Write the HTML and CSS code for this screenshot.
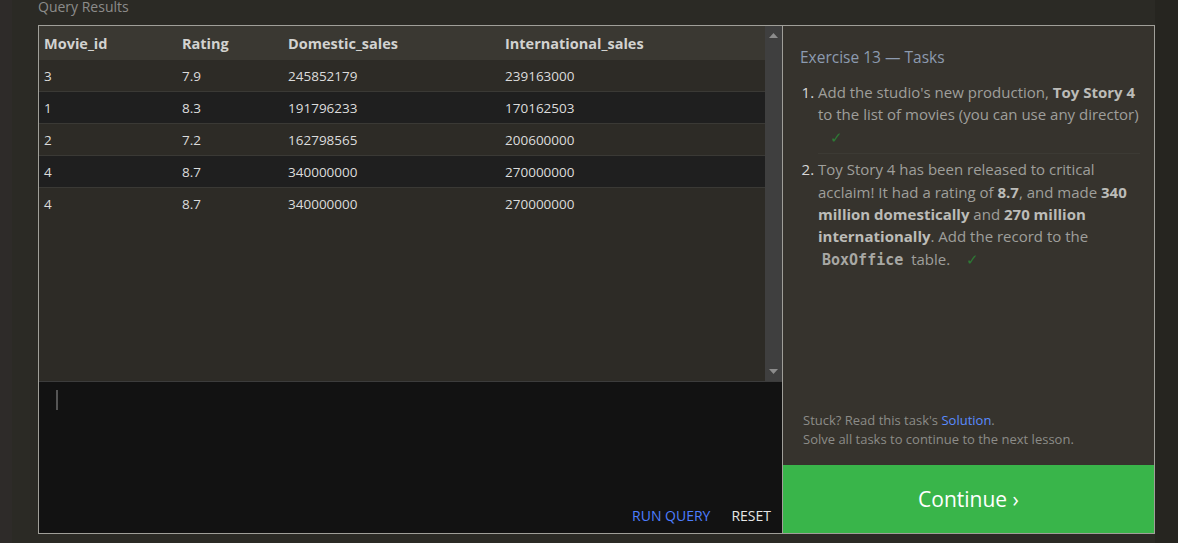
FILE: index.html
```html
<!DOCTYPE html>
<html>
<head>
<meta charset="utf-8">
<link rel="stylesheet" href="styles.css">
</head>
<body>
<div class="page">
  <div class="title">Query Results</div>
  <div class="workspace">
    <div class="left">
      <div class="results">
        <div class="table">
          <div class="row head">
            <div class="cell">Movie_id</div>
            <div class="cell">Rating</div>
            <div class="cell">Domestic_sales</div>
            <div class="cell">International_sales</div>
          </div>
          <div class="row odd">
            <div class="cell">3</div><div class="cell">7.9</div><div class="cell">245852179</div><div class="cell">239163000</div>
          </div>
          <div class="row even">
            <div class="cell">1</div><div class="cell">8.3</div><div class="cell">191796233</div><div class="cell">170162503</div>
          </div>
          <div class="row odd">
            <div class="cell">2</div><div class="cell">7.2</div><div class="cell">162798565</div><div class="cell">200600000</div>
          </div>
          <div class="row even">
            <div class="cell">4</div><div class="cell">8.7</div><div class="cell">340000000</div><div class="cell">270000000</div>
          </div>
          <div class="row odd">
            <div class="cell">4</div><div class="cell">8.7</div><div class="cell">340000000</div><div class="cell">270000000</div>
          </div>
        </div>
        <div class="scrollbar">
          <svg class="arrow" width="9" height="5" viewBox="0 0 9 5"><polygon points="0,5 9,5 4.5,0" fill="#8c8c8c"/></svg>
          <svg class="arrow" width="9" height="5" viewBox="0 0 9 5"><polygon points="0,0 9,0 4.5,5" fill="#8c8c8c"/></svg>
        </div>
      </div>
      <div class="editor">
        <div class="caret"></div>
        <div class="actions">
          <span class="run">RUN QUERY</span>
          <span class="reset">RESET</span>
        </div>
      </div>
    </div>
    <div class="right">
      <div class="tasks">
        <h2 class="tasks-title">Exercise 13 — Tasks</h2>
        <ol class="task-list">
          <li class="task">Add the studio's new production, <b>Toy Story 4</b> to the list of movies (you can use any director) <span class="check">✓</span></li>
          <li class="task">Toy Story 4 has been released to critical acclaim! It had a rating of <b>8.7</b>, and made <b>340 million domestically</b> and <b>270 million internationally</b>. Add the record to the <code>BoxOffice</code> table. <span class="check">✓</span></li>
        </ol>
      </div>
      <div class="help">
        <div>Stuck? Read this task's <span class="link">Solution</span>.</div>
        <div>Solve all tasks to continue to the next lesson.</div>
      </div>
      <div class="continue">Continue ›</div>
    </div>
  </div>
</div>
</body>
</html>
```

FILE: styles.css
```css
html, body {
  margin: 0;
  padding: 0;
}
body {
  background: linear-gradient(to right, #2e2b29 0, #2e2b29 12px, #2b2a25 12px, #2b2a25 1155px, #262520 1155px);
  height: 543px;
  overflow: hidden;
  font-family: "Open Sans", "Noto Sans", sans-serif;
}
.page {
  padding-left: 38px;
}
.title {
  height: 25px;
  line-height: 14px;
  font-size: 14px;
  color: #8c8c8a;
}
.workspace {
  display: flex;
  width: 1117px;
  height: 509px;
  box-sizing: border-box;
  border: 1px solid #a09f99;
}
.left {
  width: 743px;
  display: flex;
  flex-direction: column;
}
.results {
  height: 355px;
  display: flex;
  background: #2d2b26;
}
.table {
  flex: 1;
}
.row {
  display: grid;
  grid-template-columns: 138px 106px 217px 1fr;
  height: 32px;
  box-sizing: border-box;
  align-items: center;
  border-bottom: 1px solid #3a3935;
}
.row:last-child {
  border-bottom: none;
}
.row.head {
  height: 34px;
  background: #3a3832;
  border-bottom: none;
}
.row.odd { background: #2d2b26; }
.row.even { background: #1f1f1f; }
.cell {
  padding-left: 5px;
  font-size: 13.5px;
  color: #dcdcdc;
}
.row.head .cell {
  font-size: 14.5px;
  font-weight: 700;
  color: #d2d2d0;
}
.scrollbar {
  width: 17px;
  background: #3f3f3f;
  display: flex;
  flex-direction: column;
  justify-content: space-between;
  align-items: center;
  padding: 7px 0 7px;
  box-sizing: border-box;
}
.arrow { display: block; }
.editor {
  flex: 1;
  border-top: 1px solid #3c3c3c;
  background: #121212;
  display: flex;
  flex-direction: column;
  justify-content: space-between;
  padding: 8px 11px 9px 17px;
}
.caret {
  width: 2px;
  height: 20px;
  background: #555;
}
.actions {
  display: flex;
  justify-content: flex-end;
  gap: 21px;
  font-size: 14px;
  line-height: 16px;
}
.run { color: #4d7eff; }
.reset { color: #e6e6e6; }
.right {
  width: 371px;
  border-left: 1px solid #a09f99;
  background: #36332d;
  display: flex;
  flex-direction: column;
}
.tasks {
  flex: 1;
  padding: 20px 10px 0 17px;
}
.tasks-title {
  margin: 0 0 13px;
  font-size: 15.5px;
  font-weight: 400;
  color: #8d9bb0;
  line-height: 22px;
}
.task-list {
  margin: 0;
  padding-left: 18px;
  color: #9f9f9b;
  font-size: 15px;
  line-height: 22.4px;
}
.task::marker {
  color: #d8d8d8;
}
.task {
  padding-bottom: 5px;
  margin-bottom: 4px;
  margin-right: 4px;
  border-bottom: 1px solid #3c3a34;
}
.task:last-child {
  border-bottom: none;
}
.task b {
  color: #bcbcb8;
}
.task code {
  font-family: "DejaVu Sans Mono", "Liberation Mono", monospace;
  font-weight: 700;
  font-size: 15px;
  color: #a8a8a4;
  padding: 0 4px;
}
.check {
  color: #2d7a35;
  padding-left: 12px;
}
.help {
  padding: 0 10px 16px 20px;
  font-size: 13px;
  line-height: 19px;
  color: #8c8c88;
}
.link { color: #5a8cff; }
.continue {
  height: 68px;
  background: #39b54a;
  color: #ffffff;
  font-size: 21px;
  display: flex;
  align-items: center;
  justify-content: center;
}
```
